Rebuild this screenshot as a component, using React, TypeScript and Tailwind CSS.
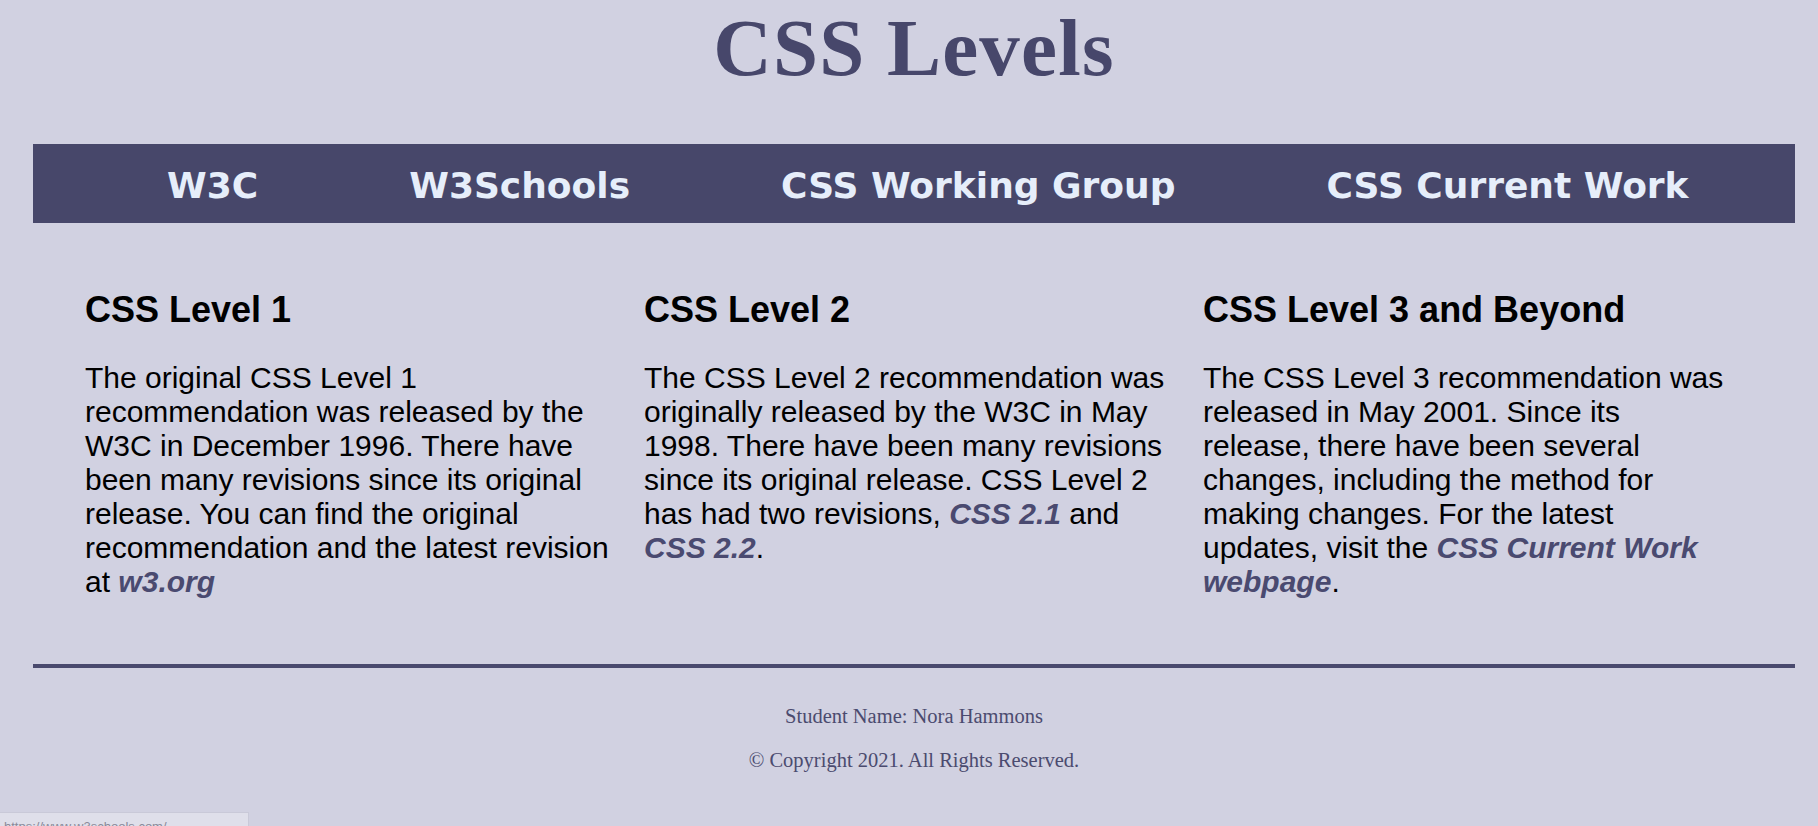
const links = ["W3C", "W3Schools", "CSS Working Group", "CSS Current Work"]

function Link({ children }: { children: React.ReactNode }) {
  return <a className="font-bold italic text-[#4a4a70]">{children}</a>
}

export default function App() {
  return (
    <div className="relative min-h-screen overflow-hidden bg-[#d1d1e1]">
      <div className="ml-[33px] mr-[23px]">
        {/* Page title */}
        <h1 className="pt-[8px] text-center font-['Liberation_Serif',serif] text-[81px] font-bold leading-[80px] tracking-[1.2px] text-[#47476b]">
          CSS Levels
        </h1>

        {/* Nav bar */}
        <nav className="mt-[56px] h-[79px] bg-[#47476a]">
          <ul className="flex h-full items-center gap-[151px] pl-[134px] pt-[4px] font-['DejaVu_Sans',Verdana,sans-serif] text-[36px] font-bold text-[#e6eefa]">
            {links.map((l) => (
              <li key={l}>{l}</li>
            ))}
          </ul>
        </nav>

        {/* Three columns */}
        <main className="mt-[67px] grid grid-cols-[528px_528px_528px] gap-x-[31px] pl-[52px] font-['Liberation_Sans',Arial,sans-serif] text-black">
          <section>
            <h2 className="text-[36px] font-bold leading-[40px]">CSS Level 1</h2>
            <p className="mt-[31px] text-[30px] leading-[34px]">
              The original CSS Level 1 recommendation was released by the W3C in December 1996. There have
              been many revisions since its original release. You can find the original recommendation and
              the latest revision at <Link>w3.org</Link>
            </p>
          </section>
          <section>
            <h2 className="text-[36px] font-bold leading-[40px]">CSS Level 2</h2>
            <p className="mt-[31px] text-[30px] leading-[34px]">
              The CSS Level 2 recommendation was originally released by the W3C in May 1998. There have been
              many revisions since its original release. CSS Level 2 has had two revisions,{" "}
              <Link>CSS 2.1</Link> and <Link>CSS 2.2</Link>.
            </p>
          </section>
          <section>
            <h2 className="text-[36px] font-bold leading-[40px]">CSS Level 3 and Beyond</h2>
            <p className="mt-[31px] text-[30px] leading-[34px]">
              The CSS Level 3 recommendation was released in May 2001. Since its release, there have been
              several changes, including the method for making changes. For the latest updates, visit the{" "}
              <Link>CSS Current Work webpage</Link>.
            </p>
          </section>
        </main>

        <hr className="mt-[65px] h-[4px] border-0 bg-[#4a4a6e]" />

        {/* Footer */}
        <footer className="mt-[37px] flex flex-col items-center gap-[21px] font-['Liberation_Serif',serif] text-[20.5px] leading-[23px] text-[#4b4b6f]">
          <p>Student Name: Nora Hammons</p>
          <p>© Copyright 2021. All Rights Reserved.</p>
        </footer>
      </div>

      {/* Browser link preview */}
      <div className="fixed left-0 top-[812px] h-[24px] w-[249px] overflow-hidden border-t border-r border-[#c9c9d8] bg-[#dfdfea] pl-[4px] pt-[6px] font-['Liberation_Sans',sans-serif] text-[13px] leading-[16px] text-[#8a8a99]">
        https://www.w3schools.com/
      </div>
    </div>
  )
}
